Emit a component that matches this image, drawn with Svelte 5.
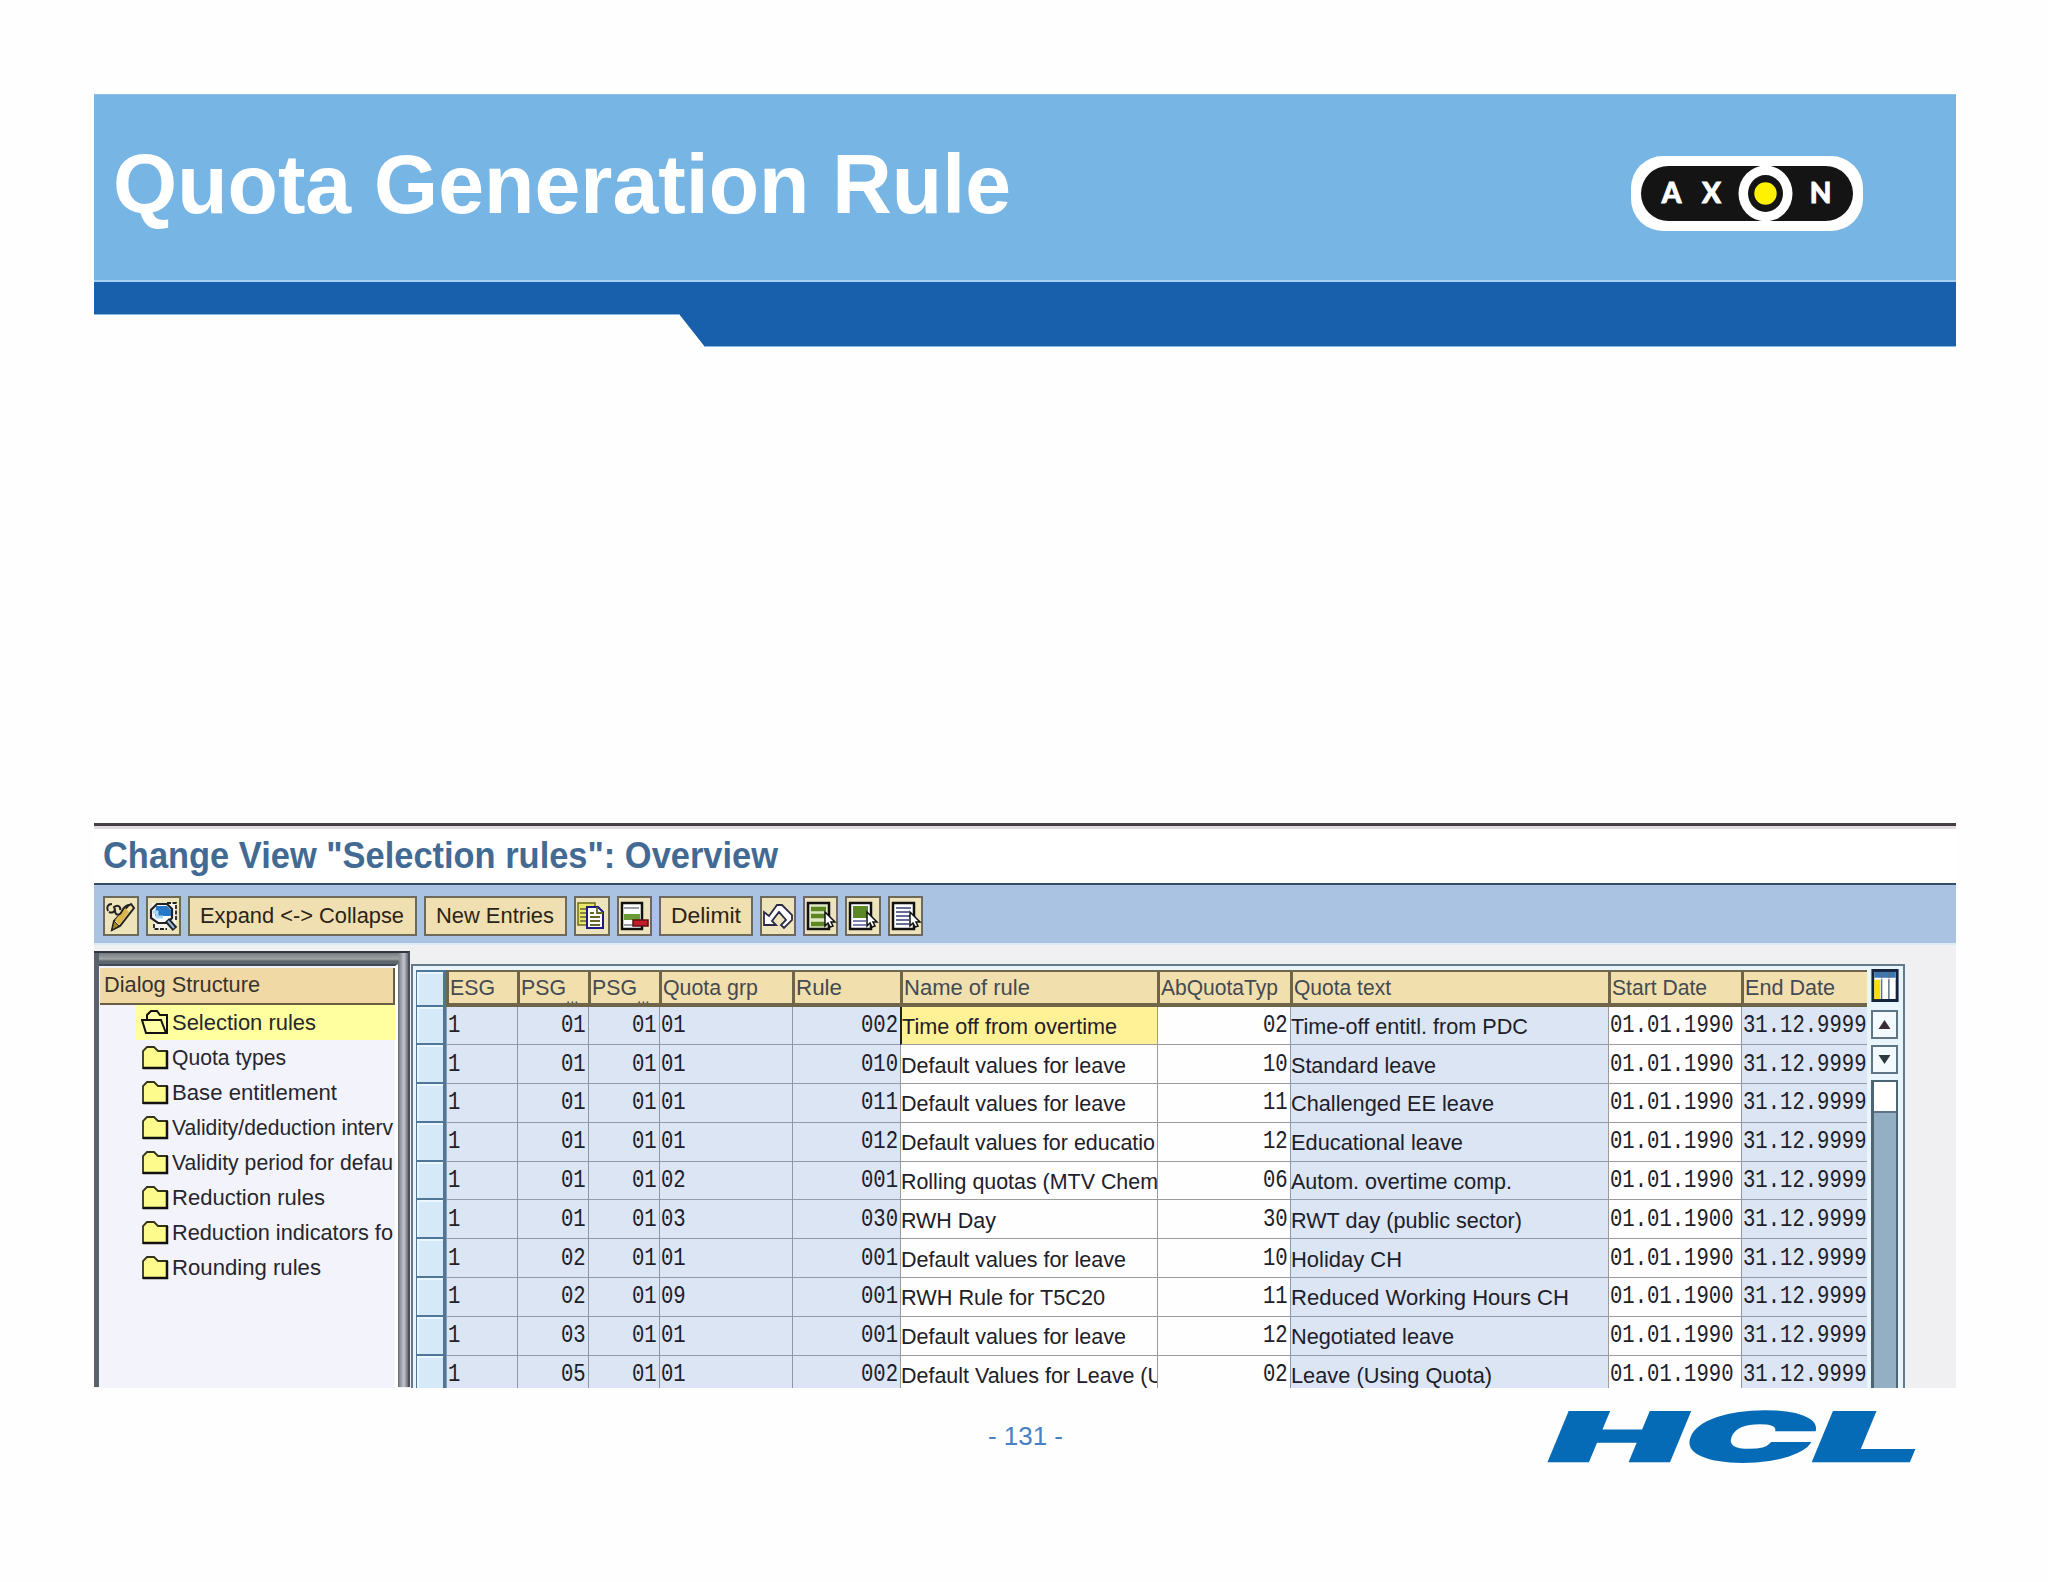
<script lang="ts">
  type Label = [text: string, width: number];

  const tree: Label[] = [
    ['Selection rules', 144],
    ['Quota types', 114],
    ['Base entitlement', 165],
    ['Validity/deduction interv', 221],
    ['Validity period for defau', 221],
    ['Reduction rules', 153],
    ['Reduction indicators fo', 221],
    ['Rounding rules', 149],
  ];

  const columns: Label[] = [
    ['ESG', 45],
    ['PSG', 45],
    ['PSG', 45],
    ['Quota grp', 95],
    ['Rule', 46],
    ['Name of rule', 126],
    ['AbQuotaTyp', 117],
    ['Quota text', 97],
    ['Start Date', 95],
    ['End Date', 90],
  ];

  const rows: { psg: string; grp: string; rule: string; name: Label; typ: string; text: Label; start: string }[] = [
    { psg: '01', grp: '01', rule: '002', name: ['Time off from overtime', 215], typ: '02', text: ['Time-off entitl. from PDC', 237], start: '01.01.1990' },
    { psg: '01', grp: '01', rule: '010', name: ['Default values for leave', 225], typ: '10', text: ['Standard leave', 145], start: '01.01.1990' },
    { psg: '01', grp: '01', rule: '011', name: ['Default values for leave', 225], typ: '11', text: ['Challenged EE leave', 203], start: '01.01.1990' },
    { psg: '01', grp: '01', rule: '012', name: ['Default values for educatio', 254], typ: '12', text: ['Educational leave', 172], start: '01.01.1990' },
    { psg: '01', grp: '02', rule: '001', name: ['Rolling quotas (MTV Chem', 257], typ: '06', text: ['Autom. overtime comp.', 221], start: '01.01.1990' },
    { psg: '01', grp: '03', rule: '030', name: ['RWH Day', 95], typ: '30', text: ['RWT day (public sector)', 231], start: '01.01.1900' },
    { psg: '02', grp: '01', rule: '001', name: ['Default values for leave', 225], typ: '10', text: ['Holiday CH', 111], start: '01.01.1990' },
    { psg: '02', grp: '09', rule: '001', name: ['RWH Rule for T5C20', 204], typ: '11', text: ['Reduced Working Hours CH', 278], start: '01.01.1900' },
    { psg: '03', grp: '01', rule: '001', name: ['Default values for leave', 225], typ: '12', text: ['Negotiated leave', 163], start: '01.01.1990' },
    { psg: '05', grp: '01', rule: '002', name: ['Default Values for Leave (U', 262], typ: '02', text: ['Leave (Using Quota)', 201], start: '01.01.1990' },
  ];

  // condense or stretch a label to a fixed width
  function fit(node: HTMLElement, width: number) {
    const natural = node.getBoundingClientRect().width;
    node.style.transform = `scaleX(${width / natural})`;
    node.style.marginRight = `${width - natural}px`;
  }
</script>

{#snippet label(text: string, width: number)}
  <span class="fit" use:fit={width}>{text}</span>
{/snippet}

{#snippet mono(text: string)}
  <span class="fit mono" use:fit={text.length * 12.35}>{text}</span>
{/snippet}

{#snippet pointer()}
  <path d="M21 14v14l3-3 2 4 3-1-2-4h4z" fill="#fff" stroke="#111" stroke-width="1.5" />
{/snippet}

<div class="slide">
  <header>
    <div class="banner">
      <h1>{@render label('Quota Generation Rule', 898)}</h1>
      <svg class="axon" viewBox="0 0 232 75">
        <rect width="232" height="75" rx="32" fill="#fff" />
        <rect x="10" y="10" width="212" height="55" rx="27.5" fill="#141414" />
        <ellipse cx="134.5" cy="37.5" rx="27" ry="28" fill="#fff" />
        <ellipse cx="134.5" cy="37.5" rx="17.5" ry="18.5" fill="#141414" />
        <circle cx="134.5" cy="37.5" r="11.2" fill="#fff200" />
        <text x="40.5" y="47.3">A</text>
        <text x="80.5" y="47.3">X</text>
        <text x="189.5" y="47.3">N</text>
      </svg>
    </div>
    <svg class="swoosh" viewBox="0 0 1862 65">
      <path d="M0 0H1862V65H611L585 32H0Z" fill="#1860ac" />
      <path d="M0 32.5H585M611 64.5H1862" stroke="#8bb7e2" fill="none" />
    </svg>
  </header>

  <section class="sap">
    <div class="title">{@render label('Change View "Selection rules": Overview', 675)}</div>

    <div class="toolbar">
      <button class="icon" aria-label="Display/Change">
        <svg viewBox="0 0 33 37">
          <path d="M27 6l3 4-14 18-8 4 2-9L24 8z" fill="#f3e3a4" stroke="#222" stroke-width="2" />
          <path d="M10 23l5 5-7 4z" fill="#a98420" stroke="#222" />
          <path d="M11 22L21 10l4 4-10 13z" fill="#dcb64a" />
          <path d="M4 13c-2-4 0-7 4-7m-3 8c5 2 7-2 5-5 4-3 7 0 6 3m-5 0c0 6 5 6 7 1 2-4 4-6 7-6" fill="none" stroke="#222" stroke-width="2" />
        </svg>
      </button>
      <button class="icon" aria-label="Details">
        <svg viewBox="0 0 33 37">
          <path d="M5 5H29V31H7V23" fill="#f4f4ec" />
          <path d="M20 5H29V22M7 26V31H20" fill="none" stroke="#222" stroke-width="1.8" stroke-dasharray="4 1.500" />
          <path d="M10 6H20L25 11V20L20 25H11L4 20V12Z" fill="#fff" stroke="#222" stroke-width="2.2" />
          <path d="M9 8H20L24 12V18H8Z" fill="#2878c8" />
          <path d="M6 14h4v5h6" fill="none" stroke="#a8d8f4" stroke-width="3" />
          <path d="M20 22L28 31" stroke="#222" stroke-width="6" />
          <path d="M21 23L27 30" stroke="#8ebce5" stroke-width="2" />
        </svg>
      </button>
      <button class="expand">{@render label('Expand <-> Collapse', 204)}</button>
      <button class="new">{@render label('New Entries', 118)}</button>
      <button class="icon" aria-label="Copy as">
        <svg viewBox="0 0 33 37">
          <path d="M3 5h17v22H3z" fill="#e8e66a" stroke="#6c6b17" stroke-width="1.5" />
          <path d="M5 11h6M5 15h6M5 19h6M5 23h6" stroke="#66652a" stroke-width="1.5" />
          <path d="M12 9H23L28 14V30H12Z" fill="#fff" stroke="#1d1a86" stroke-width="2" />
          <path d="M22 9v6h6M15 15h4M15 19h10M15 23h10M15 27h10" fill="none" stroke="#66652a" stroke-width="1.8" />
        </svg>
      </button>
      <button class="icon" aria-label="Delete">
        <svg viewBox="0 0 33 37">
          <path d="M4 5H24V31H4Z" fill="#fff" stroke="#111" stroke-width="2.5" />
          <path d="M6 10h15M6 27h15" stroke="#9a9da6" stroke-width="2" />
          <path d="M6 16H22V22H6z" fill="#6b9c37" />
          <path d="M15 22H30V28H15Z" fill="#c41c28" stroke="#5f1014" stroke-width="1.5" />
        </svg>
      </button>
      <button class="delimit">{@render label('Delimit', 70)}</button>
      <button class="icon" aria-label="Undo">
        <svg viewBox="0 0 33 37">
          <path d="M3 14V27H15L11 23L18 14L25 22L20 27L23 30L31 22V17L21 7H16L8 18Z" fill="#fff" stroke="#2b2b48" stroke-width="1.8" />
        </svg>
      </button>
      <button class="icon" aria-label="Select all">
        <svg viewBox="0 0 33 37">
          <path d="M4 5H25V31H4Z" fill="#dfe8c2" stroke="#111" stroke-width="2.5" />
          <path d="M7 11H22M7 18H22M7 26H22" stroke="#5c8722" stroke-width="4.5" />
          {@render pointer()}
        </svg>
      </button>
      <button class="icon" aria-label="Select block">
        <svg viewBox="0 0 33 37">
          <path d="M4 5H25V31H4Z" fill="#fff" stroke="#111" stroke-width="2.5" />
          <path d="M7 8H22V20H7Z" fill="#5c8722" />
          <path d="M7 23H20M7 27H20" stroke="#7c80b2" stroke-width="1.8" />
          {@render pointer()}
        </svg>
      </button>
      <button class="icon" aria-label="Deselect all">
        <svg viewBox="0 0 33 37">
          <path d="M4 5H25V31H4Z" fill="#fff" stroke="#111" stroke-width="2.5" />
          <path d="M7 10H22M7 14H20M7 18H22M7 22H20M7 26H20" stroke="#686e98" stroke-width="2" />
          {@render pointer()}
        </svg>
      </button>
    </div>

    <div class="work">
      <aside>
        <div class="panel">
          <div class="panel-head">{@render label('Dialog Structure', 156)}</div>
          <ul>
            {#each tree as [text, width], i (i)}
              <li class:open={i === 0}>
                <svg viewBox="0 0 28 26">
                  {#if i === 0}
                    <path d="M6 10V5L10 1H16L19 5H26V23H5L1 10H20L25 23" fill="#ffffa6" stroke="#111" stroke-width="2" />
                  {:else}
                    <path d="M2 23V6L6 2H13L17 6H26V23Z" fill="#fdfb8c" stroke="#33331c" stroke-width="1.8" />
                    <path d="M26 6V23H2" fill="none" stroke="#111" stroke-width="2.5" />
                  {/if}
                </svg>
                {@render label(text, width)}
              </li>
            {/each}
          </ul>
        </div>
      </aside>

      <div class="table">
        <div class="grid">
          <div class="line head">
            <div class="sel"></div>
            {#each columns as [text, width], i (i)}
              <div class="cell">
                {@render label(text, width)}
                {#if text === 'PSG'}<span class="dots">...</span>{/if}
              </div>
            {/each}
          </div>
          {#each rows as row, i (i)}
            <div class="line">
              <div class="sel"></div>
              <div class="cell">{@render mono('1')}</div>
              <div class="cell right">{@render mono(row.psg)}</div>
              <div class="cell right">{@render mono('01')}</div>
              <div class="cell">{@render mono(row.grp)}</div>
              <div class="cell right">{@render mono(row.rule)}</div>
              <div class="cell edit text" class:current={i === 0}>{@render label(row.name[0], row.name[1])}</div>
              <div class="cell edit right">{@render mono(row.typ)}</div>
              <div class="cell text">{@render label(row.text[0], row.text[1])}</div>
              <div class="cell edit">{@render mono(row.start)}</div>
              <div class="cell">{@render mono('31.12.9999')}</div>
            </div>
          {/each}
        </div>
        <div class="scroll">
          <svg class="config" viewBox="0 0 28 34">
            <path d="M1.5 1.5H26.5V32.5H1.5Z" fill="#fff" stroke="#16233d" stroke-width="3" />
            <path d="M3 3H25V9H3Z" fill="#3a78b4" />
            <path d="M3 11H9V31H3Z" fill="#f7e000" />
            <path d="M10.5 3V31M18 3V31" stroke="#5b6f86" stroke-width="1.5" />
            <path d="M3 10H25" stroke="#fff" />
          </svg>
          <div class="arrow"><svg viewBox="0 0 12 9"><path d="M6 0L12 9H0Z" fill="#3a2b36" /></svg></div>
          <div class="arrow"><svg viewBox="0 0 12 9"><path d="M0 0H12L6 9Z" fill="#2b3a3f" /></svg></div>
          <div class="track"><div class="thumb"></div></div>
        </div>
      </div>
    </div>
  </section>

  <footer>
    <div class="page">{@render label('- 131 -', 75)}</div>
    <svg class="hcl" viewBox="0 0 370 56">
      <text transform="translate(-5 51.500) skewX(-22.5) scale(2.5 1)" textLength="53" lengthAdjust="spacingAndGlyphs">H</text>
      <text transform="translate(130 51.500) skewX(-22.5) scale(2.5 1)" textLength="51" lengthAdjust="spacingAndGlyphs">C</text>
      <text transform="translate(259 51.500) skewX(-22.5) scale(2.5 1)" textLength="42" lengthAdjust="spacingAndGlyphs">L</text>
    </svg>
  </footer>
</div>

<style>
  :global(body) { margin: 0; background: #fff; }
  .slide {
    box-sizing: border-box; width: 2048px; height: 1582px; padding: 94px 92px 0 94px;
    background: #fefefe; font-family: 'Liberation Sans', Arial, sans-serif;
    overflow: hidden;
  }
  .fit { display: inline-block; flex: none; white-space: pre; transform-origin: 0 50%; }
  .mono { font-family: 'Liberation Mono', monospace; font-size: 25px; }

  .banner {
    display: flex; justify-content: space-between; box-sizing: border-box; height: 188px;
    padding: 0 93px 0 19px;
    background: #77b5e5; border-top: 1px solid #8fc0e8; border-bottom: 2px solid #a5d0f3;
  }
  h1 { margin: 41px 0 0; font-size: 84px; line-height: 96px; color: #fff; }
  .axon { width: 232px; height: 75px; margin-top: 61px; }
  .axon text { font: 900 28px Lato, sans-serif; fill: #fff; stroke: #fff; stroke-width: 0.8; text-anchor: middle; }
  .swoosh { display: block; width: 1862px; height: 65px; }

  .sap { height: 565px; margin-top: 476px; overflow: hidden; background: #f0f0f2; }
  .title {
    box-sizing: border-box; height: 62px; padding: 8px 0 0 9px;
    border-top: 3px solid #463f46; border-bottom: 2px solid #334c68;
    background: #fff; box-shadow: inset 0 3px #e0dce0;
    color: #436a93; font-size: 36px; font-weight: bold; line-height: 43px;
  }
  .toolbar {
    display: flex; gap: 7px; box-sizing: border-box; height: 60px; padding: 11px 9px 0;
    background: #abc3e3; border-bottom: 2px solid #dcecf4;
  }
  button {
    box-sizing: border-box; height: 40px; padding: 0; flex: none;
    display: flex; align-items: center; justify-content: center;
    background: #f0dfb0; border: 2px solid #6d6a5c; border-radius: 0;
    font: 22.5px 'Liberation Sans', Arial, sans-serif; color: #2a2418;
  }
  .icon { width: 35.5px; background: #eee4bc; }
  .icon svg { width: 33px; height: 37px; flex: none; }
  .expand { width: 228.5px; }
  .new { width: 143.5px; }
  .delimit { width: 94px; }

  .work { display: flex; height: 443px; font-size: 22.5px; }
  aside {
    box-sizing: border-box; width: 316px; height: 436px; margin-top: 6px; padding: 3px 0 0;
    border-top: 2px solid #30363c; border-right: 2px solid #4b5058;
    background: linear-gradient(90deg, #59616c 5px, transparent 5px 304px, #8f929c 306px, #c3c5cc 310px, #656b74 314px),
      linear-gradient(#747b80, #a1a5a8 6px, #5f676c 8px);
  }
  .panel {
    box-sizing: border-box; height: 431px; width: 299px; margin: 8px 0 0 5px; padding: 2px 0 0 1px;
    border-top: 2px solid #3e4a54; border-right: 3px solid #fff; overflow: hidden;
    background: #f3f3fc;
  }
  .panel-head {
    display: flex; align-items: center; box-sizing: border-box; height: 37px; padding: 0 0 1px 4px;
    background: #f0d9a4; border: solid #6b5c44; border-width: 0 2px 2px 0; color: #37332f;
  }
  ul { list-style: none; margin: 0; padding: 0; }
  li {
    display: flex; align-items: center; height: 35px; margin-left: 36px; padding-left: 5px;
    color: #26262c;
  }
  li svg { width: 28px; height: 26px; margin-right: 3px; flex: none; }
  .open { background: #ffffa0; }

  .table {
    display: flex; flex: none; box-sizing: border-box; width: 1494px; height: 424px;
    margin: 19px 0 0 1px; padding: 4px 0 0 3px;
    border: solid #63788b; border-width: 2px 2px 0; background: #e9f5fc;
  }
  .grid { width: 1451px; flex: none; }
  .line {
    display: grid; height: 38.8px;
    grid-template-columns: 30px 71px 71px 71px 133px 108px 257px 133px 318px 133px 126px;
  }
  .cell {
    display: flex; align-items: center; box-sizing: border-box; min-width: 0; padding-left: 1px;
    overflow: hidden; background: #dbe5f4; color: #1d2029;
    border-left: 1px solid #8e98a8; border-bottom: 1.5px solid #909bab;
  }
  .right { justify-content: flex-end; padding-right: 2px; }
  .text { padding-top: 3px; padding-left: 0; }
  .edit { background: #fefefe; border-left-color: #9b9b9b; border-bottom-color: #9b9b9b; }
  .current { background: #fff296; border-left: 2px solid #222; }
  .sel {
    box-sizing: border-box; background: #d6e9f8; border: solid #4f7696;
    border-width: 0 3px 2px 1px; box-shadow: inset 2px 2px #eaf6fd;
  }
  .head { height: 36.5px; }
  .head .cell {
    background: #f1dfae; color: #444a52; padding: 2px 0 0 1px;
    border: solid #6f6548; border-width: 2px 0 4px 3px;
  }
  .head .sel { border-top: 2px solid #4f7696; }
  .dots { align-self: flex-end; margin-bottom: -2px; font-size: 15px; line-height: 15px; }

  .scroll { display: flex; flex-direction: column; width: 27px; margin-left: 4px; }
  .config { width: 28px; height: 33px; flex: none; margin: -1px 0 8px; }
  .arrow {
    display: flex; align-items: center; justify-content: center; box-sizing: border-box;
    width: 27px; height: 29px; margin-bottom: 6px; flex: none;
    border: 2px solid #5f7585; background: #f3fafd;
  }
  .arrow svg { width: 13px; height: 9px; }
  .track { flex: 1; background: #92afc4; border: solid #4d6472; border-width: 2px 2px 0 3px; }
  .thumb { height: 29px; background: #fff; border-bottom: 2px solid #5f7585; }

  footer { display: flex; justify-content: space-between; padding: 0 38px 0 894px; }
  .page { padding-top: 34px; font-size: 25px; line-height: 29px; color: #4a80c4; }
  .hcl { width: 370px; height: 56px; margin: 21px 0 0; overflow: visible; }
  .hcl text { font: 900 67px Inter, 'Liberation Sans', sans-serif; fill: #066bb7; stroke: #066bb7; stroke-width: 2.5; }
</style>
